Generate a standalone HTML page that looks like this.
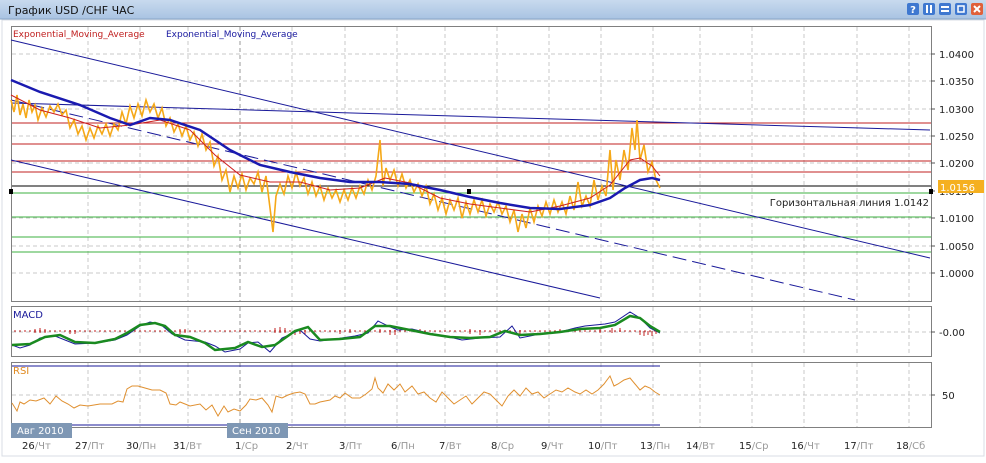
<!DOCTYPE html><html><head><meta charset="utf-8"><style>
body{margin:0;width:986px;height:459px;background:#fff;overflow:hidden;font-family:"DejaVu Sans","Liberation Sans",sans-serif}
</style></head><body>
<svg width="986" height="459" xmlns="http://www.w3.org/2000/svg" font-family="DejaVu Sans, Liberation Sans, sans-serif">
<defs><linearGradient id="tb" x1="0" y1="0" x2="0" y2="1"><stop offset="0" stop-color="#c8daee"/><stop offset="1" stop-color="#a9c3e2"/></linearGradient></defs>
<rect x="0" y="0" width="986" height="459" fill="#fff"/>
<rect x="0" y="0" width="986" height="19" fill="url(#tb)"/>
<line x1="0" y1="19" x2="986" y2="19" stroke="#8aa6c8"/>
<text x="8" y="14" font-size="11" fill="#111">График USD /CHF  ЧАС</text>
<g>
<rect x="907" y="3" width="12" height="12" rx="2" fill="#3f78d0"/><text x="913" y="13" font-size="10" fill="#fff" text-anchor="middle" font-weight="bold">?</text>
<rect x="923" y="3" width="12" height="12" rx="2" fill="#3f78d0"/><rect x="926" y="5" width="2" height="8" fill="#fff"/><rect x="930" y="5" width="2" height="8" fill="#fff"/>
<rect x="939" y="3" width="12" height="12" rx="2" fill="#3f78d0"/><rect x="941" y="6" width="8" height="2" fill="#fff"/><rect x="941" y="10" width="8" height="2" fill="#fff"/>
<rect x="955" y="3" width="12" height="12" rx="2" fill="#3f78d0"/><rect x="958" y="6" width="6" height="6" fill="none" stroke="#fff" stroke-width="1.5"/>
<rect x="971" y="3" width="12" height="12" rx="2" fill="#e0603a"/><path d="M974 6l6 6M980 6l-6 6" stroke="#fff" stroke-width="2"/>
</g>
<rect x="2" y="20" width="982" height="436" fill="none" stroke="#d8dde4"/>
<rect x="11.5" y="26.5" width="920" height="275" fill="#fff" stroke="#808080"/>
<rect x="11.5" y="306.5" width="920" height="50" fill="#fff" stroke="#808080"/>
<rect x="11.5" y="362.5" width="920" height="65" fill="#fff" stroke="#808080"/>
<g stroke="#c8c8c8" stroke-dasharray="4,3" stroke-width="1">
<path d="M12 54H931M12 81H931M12 109H931M12 136H931M12 163H931M12 218H931M12 246H931M12 273H931M12 332H931M12 395H931"/>
<path d="M88 27V301M140 27V301M188 27V301M292 27V301M345 27V301M397 27V301M445 27V301M497 27V301M549 27V301M601 27V301M653 27V301M700 27V301M752 27V301M804 27V301M857 27V301M909 27V301"/>
<path d="M88 307V356M140 307V356M188 307V356M292 307V356M345 307V356M397 307V356M445 307V356M497 307V356M549 307V356M601 307V356M653 307V356M700 307V356M752 307V356M804 307V356M857 307V356M909 307V356"/>
<path d="M88 363V427M140 363V427M188 363V427M292 363V427M345 363V427M397 363V427M445 363V427M497 363V427M549 363V427M601 363V427M653 363V427M700 363V427M752 363V427M804 363V427M857 363V427M909 363V427"/>
</g>
<path d="M240 27V301M240 307V356M240 363V437" stroke="#999" stroke-dasharray="4,3"/>
<g font-size="10" fill="#222">
<text x="939" y="58">1.0400</text><text x="939" y="85">1.0350</text><text x="939" y="113">1.0300</text><text x="939" y="140">1.0250</text><text x="939" y="167">1.0200</text><text x="939" y="195">1.0150</text><text x="939" y="222">1.0100</text><text x="939" y="250">1.0050</text><text x="939" y="277">1.0000</text>
<text x="939" y="336">-0.00</text><text x="942" y="399">50</text>
</g>
<g stroke="#555"><path d="M931 54h4M931 81h4M931 109h4M931 136h4M931 163h4M931 191h4M931 218h4M931 246h4M931 273h4M931 332h4M931 395h4"/></g>
<rect x="938" y="180" width="46" height="13" fill="#f5b020"/><text x="940" y="191" font-size="10" fill="#fff">1.0156</text>
<g stroke-width="1">
<path d="M12 123H931M12 144H931M12 161H931M12 172H931" stroke="#c02020"/>
<path d="M12 186H931" stroke="#000"/>
<path d="M12 193H931M12 217H931M12 237H931M12 252H931" stroke="#3cb040"/>
</g>
<rect x="9" y="189" width="4" height="5" fill="#000"/><rect x="929" y="189" width="4" height="5" fill="#000"/><rect x="467" y="189" width="4" height="5" fill="#000"/>
<text x="929" y="206" font-size="10" fill="#222" text-anchor="end">Горизонтальная линия 1.0142</text>
<g stroke="#1a1a9a" stroke-width="1" fill="none">
<path d="M11 40L930 258"/>
<path d="M11 160L600 298"/>
<path d="M11 100L855 300" stroke-dasharray="14,6"/>
<path d="M11 103L930 130"/>
</g>
<polyline fill="none" stroke="#f5a818" stroke-width="1.6" points="11,100 14,112 17,95 20,115 23,104 26,118 29,100 32,112 35,105 38,120 42,108 46,117 50,106 54,112 58,104 62,115 66,110 70,128 74,120 78,134 82,126 86,140 90,128 94,138 98,126 102,134 106,124 110,136 114,124 118,130 122,112 126,124 130,106 134,118 138,104 142,116 146,100 150,112 154,104 158,118 162,108 166,126 170,118 174,132 178,124 182,136 186,126 190,140 194,132 198,146 202,134 206,150 210,142 214,166 218,156 222,180 226,170 230,192 234,176 238,188 242,174 246,190 250,178 254,184 258,172 262,192 266,176 270,208 273,232 276,196 280,184 284,194 288,176 292,188 296,172 300,186 304,178 308,194 312,182 316,196 320,186 324,200 328,188 332,198 336,190 340,202 344,190 348,200 352,188 356,198 360,186 364,194 368,180 372,190 376,176 380,140 383,186 386,168 390,180 394,170 398,186 402,174 406,188 410,180 414,192 418,184 422,196 426,186 430,204 434,194 438,210 442,198 446,214 450,200 454,210 458,198 462,218 466,202 470,214 474,200 478,212 482,200 486,216 490,204 494,212 498,202 502,214 506,206 510,222 514,210 518,232 522,214 526,228 530,208 534,222 538,206 542,216 546,202 550,214 554,200 558,212 562,202 566,214 570,196 574,210 578,182 582,206 586,196 590,206 594,180 598,200 602,186 606,196 610,150 613,190 616,160 620,180 624,150 628,170 632,128 635,150 637,120 640,160 644,145 648,172 652,162 656,180 660,188"/>
<polyline fill="none" stroke="#cc2020" stroke-width="1" points="11,95 40,110 70,118 100,128 130,125 160,120 190,130 215,155 240,175 270,182 300,182 330,190 360,188 385,178 410,183 440,198 470,204 500,208 530,212 560,206 590,198 610,185 630,160 640,158 652,166 660,176"/>
<polyline fill="none" stroke="#1a1ab0" stroke-width="2.5" points="11,80 40,92 80,105 110,118 130,125 150,118 170,120 200,130 230,150 260,165 290,172 320,178 350,182 380,182 410,184 440,190 470,197 500,203 530,208 560,209 590,205 610,198 625,188 640,180 652,178 660,180"/>
<text x="13" y="37" font-size="9" fill="#c02020">Exponential_Moving_Average</text>
<text x="166" y="37" font-size="9" fill="#1a1aa0">Exponential_Moving_Average</text>
<text x="13" y="318" font-size="10" fill="#1a1a9a">MACD</text>
<g stroke="#c02020" stroke-width="1"><path d="M14 331h646" stroke-dasharray="2,3"/><path d="M35 329v4M40 328v5M45 329v4M70 330v4M75 330v4M180 329v5M185 329v4M275 328v5M280 327v6M285 328v5M295 330v5M300 330v4M305 330v4M340 330v4M350 329v4M380 329v4M390 330v5M395 330v5M420 329v4M470 329v5M480 330v5M520 330v5M560 329v4M600 329v4M612 328v5M620 328v4M640 331v4M644 331v5M648 331v4M652 331v5M656 331v3"/></g>
<polyline fill="none" stroke="#1a1a9a" stroke-width="1" points="12,345 20,348 30,345 40,338 55,336 65,340 75,344 95,343 115,340 127,335 140,326 150,322 160,324 172,334 185,340 205,342 215,346 225,352 240,349 248,343 258,342 270,352 282,338 300,330 310,339 320,341 335,339 355,336 368,333 378,321 388,326 398,330 412,329 428,333 445,336 462,340 480,338 500,337 512,326 520,338 540,334 560,332 575,328 585,326 605,324 615,322 630,312 640,318 650,328 660,333"/>
<polyline fill="none" stroke="#1a8a20" stroke-width="2.5" points="12,345 30,344 45,337 60,335 75,342 95,343 115,339 127,333 140,325 155,323 165,326 175,335 190,337 205,343 215,350 235,348 248,342 262,347 275,345 295,331 308,327 320,340 340,339 360,337 375,326 390,326 410,330 430,334 450,337 470,338 490,337 505,331 520,335 540,334 560,332 580,329 600,328 615,325 630,316 640,318 650,326 660,332"/>
<text x="13" y="374" font-size="10" fill="#e08a20">RSI</text>
<path d="M12 366H660M12 425H660" stroke="#1a1a9a"/>
<polyline fill="none" stroke="#e09030" stroke-width="1" points="12,403 17,411 20,402 24,404 30,400 36,401 44,398 50,404 56,396 62,401 68,404 74,408 80,405 88,406 100,404 112,404 118,401 123,402 127,389 132,386 138,386 145,388 152,390 160,390 166,393 170,404 176,405 180,402 190,406 200,404 206,410 212,405 218,416 224,406 228,412 234,409 240,411 246,405 250,399 256,400 262,398 268,405 272,412 276,396 282,398 288,395 294,393 300,392 305,394 310,404 315,404 320,402 330,400 335,396 340,398 345,393 352,398 360,398 366,394 372,389 375,378 378,388 383,393 388,384 394,390 400,384 405,392 412,386 418,394 424,392 430,398 436,402 442,392 448,398 454,404 460,400 466,396 472,404 478,398 484,392 490,394 496,400 502,406 508,396 514,390 520,396 526,388 532,394 538,392 544,398 550,394 556,390 562,392 568,388 575,392 580,394 586,390 592,394 598,390 604,384 610,376 614,386 618,384 624,380 630,378 635,384 640,390 645,386 650,388 655,392 660,395"/>
<rect x="11" y="423" width="61" height="15" fill="#7e97b4"/><text x="17" y="434" font-size="10" fill="#fff">Авг 2010</text>
<rect x="227" y="423" width="61" height="15" fill="#7e97b4"/><text x="232" y="434" font-size="10" fill="#fff">Сен 2010</text>
<g font-size="10" fill="#222">
<text x="22" y="449">26<tspan fill="#999">/Чт</tspan></text>
<text x="75" y="449">27<tspan fill="#999">/Пт</tspan></text>
<text x="126" y="449">30<tspan fill="#999">/Пн</tspan></text>
<text x="173" y="449">31<tspan fill="#999">/Вт</tspan></text>
<text x="235" y="449">1<tspan fill="#999">/Ср</tspan></text>
<text x="286" y="449">2<tspan fill="#999">/Чт</tspan></text>
<text x="339" y="449">3<tspan fill="#999">/Пт</tspan></text>
<text x="391" y="449">6<tspan fill="#999">/Пн</tspan></text>
<text x="439" y="449">7<tspan fill="#999">/Вт</tspan></text>
<text x="491" y="449">8<tspan fill="#999">/Ср</tspan></text>
<text x="541" y="449">9<tspan fill="#999">/Чт</tspan></text>
<text x="588" y="449">10<tspan fill="#999">/Пт</tspan></text>
<text x="640" y="449">13<tspan fill="#999">/Пн</tspan></text>
<text x="686" y="449">14<tspan fill="#999">/Вт</tspan></text>
<text x="739" y="449">15<tspan fill="#999">/Ср</tspan></text>
<text x="791" y="449">16<tspan fill="#999">/Чт</tspan></text>
<text x="844" y="449">17<tspan fill="#999">/Пт</tspan></text>
<text x="896" y="449">18<tspan fill="#999">/Сб</tspan></text>
</g>
</svg>
</body></html>
